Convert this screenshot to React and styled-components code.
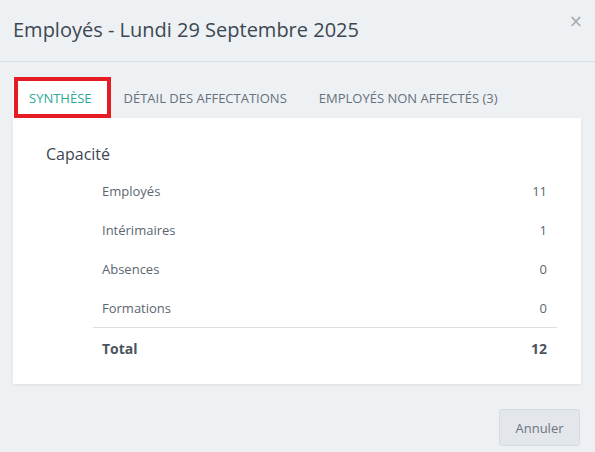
import styled, { createGlobalStyle } from "styled-components";

const GlobalStyle = createGlobalStyle`
  html, body {
    margin: 0;
    padding: 0;
    background: #edf1f4;
    font-family: "Open Sans", "Noto Sans", sans-serif;
  }
  * { box-sizing: border-box; }
`;

const Modal = styled.div`
  width: 595px;
  height: 452px;
  background: #edf1f4;
  display: flex;
  flex-direction: column;
`;

const Header = styled.div`
  position: relative;
  height: 62px;
  display: flex;
  align-items: center;
  padding: 0 13px 2px;
  border-bottom: 1px solid #d9dee3;
`;

const Title = styled.h1`
  margin: 0;
  font-size: 20px;
  font-weight: 400;
  color: #3d4752;
`;

const Close = styled.button`
  position: absolute;
  top: 13px;
  right: 12px;
  border: 0;
  background: none;
  padding: 0;
  font-size: 17px;
  line-height: 17px;
  color: #a6abb0;
  cursor: pointer;
  font-family: "DejaVu Sans", sans-serif;
`;

const Body = styled.div`
  padding: 16px 14px 0 13px;
`;

const Tabs = styled.div`
  display: flex;
  height: 40px;
`;

const Tab = styled.div`
  position: relative;
  display: flex;
  align-items: center;
  padding: 0 16px;
  font-size: 13px;
  text-transform: uppercase;
  color: ${(p) => (p.active ? "#2aab97" : "#66707b")};
  background: ${(p) => (p.active ? "#fff" : "transparent")};

  ${(p) =>
    p.active &&
    `
    &::after {
      content: "";
      position: absolute;
      left: 1px;
      right: -3px;
      top: -1px;
      bottom: 0;
      border: 4px solid #e51c23;
    }
  `}
`;

const Card = styled.div`
  background: #fff;
  box-shadow: 0 1px 3px rgba(0, 0, 0, 0.08);
  padding: 24px 24px 15px 33px;
`;

const Heading = styled.h2`
  margin: 0 0 5px;
  font-size: 16px;
  font-weight: 400;
  line-height: 24px;
  color: #3d4752;
`;

const List = styled.div`
  margin-left: 47px;
`;

const Row = styled.div`
  display: flex;
  justify-content: space-between;
  align-items: center;
  height: ${(p) => (p.total ? "42px" : "39px")};
  padding: 0 10px 0 9px;
  font-size: ${(p) => (p.total ? "14px" : "13px")};
  font-weight: ${(p) => (p.total ? 700 : 400)};
  color: ${(p) => (p.total ? "#4b5561" : "#5c6670")};
  border-top: ${(p) => (p.total ? "1px solid #dcdfe3" : "none")};
`;

const Footer = styled.div`
  display: flex;
  justify-content: flex-end;
  padding: 25px 15px 0;
`;

const Button = styled.button`
  width: 81px;
  height: 37px;
  border: 1px solid #d6dbe0;
  border-radius: 3px;
  background: #e3e7eb;
  color: #6b7580;
  font-family: inherit;
  font-size: 13px;
  cursor: pointer;
`;

const rows = [
  ["Employés", 11],
  ["Intérimaires", 1],
  ["Absences", 0],
  ["Formations", 0],
];

export default function App() {
  return (
    <Modal>
      <GlobalStyle />
      <Header>
        <Title>Employés - Lundi 29 Septembre 2025</Title>
        <Close>×</Close>
      </Header>
      <Body>
        <Tabs>
          <Tab active>Synthèse</Tab>
          <Tab>Détail des affectations</Tab>
          <Tab>Employés non affectés (3)</Tab>
        </Tabs>
        <Card>
          <Heading>Capacité</Heading>
          <List>
            {rows.map(([label, value]) => (
              <Row key={label}>
                <span>{label}</span>
                <span>{value}</span>
              </Row>
            ))}
            <Row total>
              <span>Total</span>
              <span>12</span>
            </Row>
          </List>
        </Card>
      </Body>
      <Footer>
        <Button>Annuler</Button>
      </Footer>
    </Modal>
  );
}
